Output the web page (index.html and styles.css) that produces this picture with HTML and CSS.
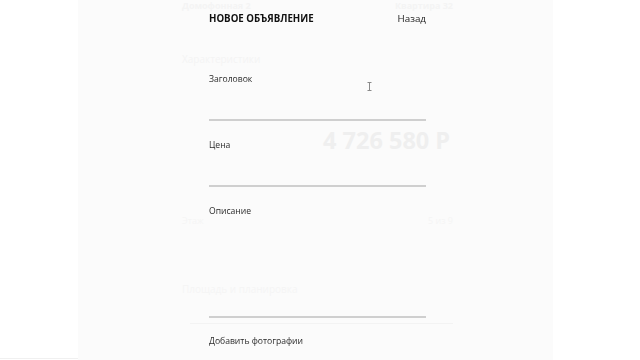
FILE: index.html
```html
<!DOCTYPE html>
<html lang="ru">
	<head>
		<meta charset="UTF-8" />
		<meta name="viewport" content="width=device-width, initial-scale=1.0" />
		<title>Новое объявление</title>
		<link rel="stylesheet" href="styles.css">
	</head>
	<body>
		<div class="page">
			<div class="gutter"></div>

			<div class="listing">
				<div class="listing-top">
					<span class="crumb">Домофонная 2</span>
					<span class="crumb">Квартира 32</span>
				</div>
				<div class="listing-sub">Характеристики</div>
				<div class="listing-price">4 726 580 Р</div>
				<div class="listing-row">
					<span>Этаж</span>
					<span>5 из 9</span>
				</div>
				<div class="listing-note">Площадь и планировка</div>
				<div class="listing-rule"></div>
			</div>
		</div>

		<div class="overlay">
			<form class="new-ad">
				<div class="new-ad-head">
					<span class="new-ad-title">НОВОЕ ОБЪЯВЛЕНИЕ</span>
					<a class="back" href="#">Назад</a>
				</div>

				<label class="field">
					<span class="field-label">Заголовок</span>
					<input class="field-input" type="text" name="title" />
				</label>

				<label class="field">
					<span class="field-label">Цена</span>
					<input class="field-input" type="text" name="price" />
				</label>

				<label class="field">
					<span class="field-label">Описание</span>
					<textarea class="field-input field-text" name="description"></textarea>
				</label>

				<div class="add-photos">Добавить фотографии</div>
			</form>

			<!-- text cursor left over the title field -->
			<svg class="ibeam" width="5" height="9" viewBox="0 0 5 9">
				<path d="M0.5 0.5h4M2.5 0.5v8M0.5 8.5h4" stroke="#8a8a8a" stroke-width="1" fill="none" />
			</svg>
		</div>
	</body>
</html>
```

FILE: styles.css
```css
body {
	margin: 0;
	background-color: #ffffff;
	font-family: "Open Sans", "Liberation Sans", sans-serif;
	color: #222222;
}

.page {
	display: flex;
	height: 360px;
	overflow: hidden;
}

.gutter {
	width: 78px;
	flex: none;
	border-bottom: 1px solid #f0f0f0;
	height: 358px;
}

.listing {
	width: 475px;
	flex: none;
	background-color: #fbfbfb;
	padding: 0 100px 0 104px;
	box-sizing: border-box;
	color: #f4f4f4;
}

.listing-top {
	display: flex;
	justify-content: space-between;
	margin-top: 1px;
	margin-bottom: 3px;
	font-size: 9px;
	font-weight: bold;
	line-height: 10px;
}

.listing-sub {
	margin-top: 41px;
	font-size: 10px;
	line-height: 14px;
}

.listing-price {
	margin: 60px 0 0 141px;
	font-size: 23.5px;
	font-weight: bold;
	line-height: 28px;
	color: #efefef;
}

.listing-row {
	display: flex;
	justify-content: space-between;
	margin-top: 61px;
	font-size: 9px;
	line-height: 12px;
	color: #f5f5f5;
}

.listing-note {
	margin-top: 55px;
	font-size: 10px;
	line-height: 14px;
	color: #f5f5f5;
}

.listing-rule {
	margin: 27px 0 0 8px;
	border-top: 1px solid #f3f3f3;
}

.overlay {
	position: fixed;
	top: 0;
	left: 0;
	right: 0;
	bottom: 0;
}

.new-ad {
	width: 217px;
	margin: 12px 0 0 209px;
}

.new-ad-head {
	display: flex;
	justify-content: space-between;
	align-items: center;
	line-height: 14px;
	margin-bottom: 46px;
}

.new-ad-title {
	font-size: 9.7px;
	font-weight: bold;
	color: #111111;
}

.back {
	font-size: 9.8px;
	color: #222222;
	text-decoration: none;
}

.field {
	display: block;
	margin-bottom: 17px;
}

.field-label {
	display: block;
	font-size: 8.6px;
	line-height: 14px;
	color: #2b2b2b;
}

.field-input {
	display: block;
	width: 100%;
	height: 33px;
	padding: 0;
	border: none;
	border-bottom: 2px solid #cfcfcf;
	background: transparent;
	outline: none;
	font-family: inherit;
	font-size: 10px;
	resize: none;
}

.field-text {
	height: 98px;
}

.add-photos {
	margin-top: -1px;
	font-size: 8.6px;
	line-height: 14px;
	color: #2b2b2b;
}

.ibeam {
	position: absolute;
	left: 367px;
	top: 82px;
}
```
